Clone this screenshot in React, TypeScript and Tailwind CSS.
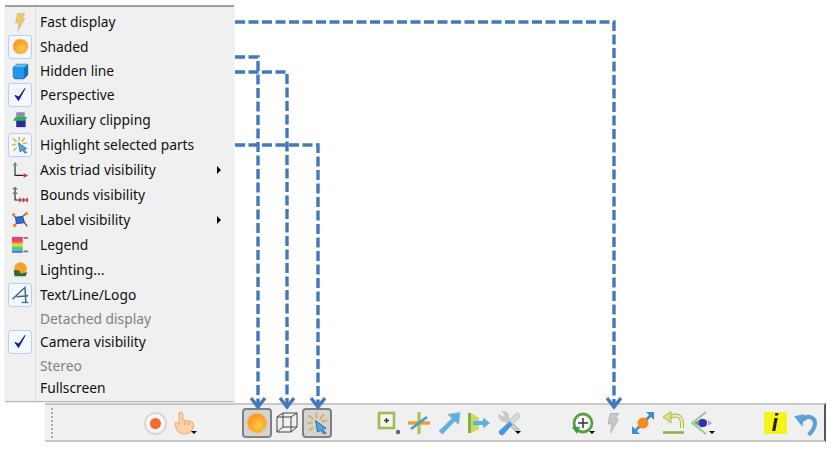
import type { ReactNode } from 'react';

function Check() {
  return (
    <svg viewBox="0 0 20 20" className="w-[20px] h-[20px]">
      <path d="M5 10.5 L8.5 15.5 L15 3.5 L9 12 Z" fill="#1a1aa8" stroke="#1a1aa8" strokeWidth="1" strokeLinejoin="round" />
    </svg>
  );
}

function Bolt({ color = '#f0c860', edge = '#c9b98f', big }: { color?: string; edge?: string; big?: boolean }) {
  return (
    <svg viewBox="0 0 20 24" className={big ? 'w-[18px] h-[22px]' : 'w-[16px] h-[20px]'}>
      <path d="M7 1.5 L16 1.5 L12.5 7.5 L16 7.5 L7.5 23 L9 13 L4.5 13 Z" fill={color} stroke={edge} strokeWidth="1" strokeLinejoin="round" />
    </svg>
  );
}

function Sun({ size = 17 }: { size?: number }) {
  return (
    <svg viewBox="0 0 20 20" width={size} height={size}>
      <defs>
        <radialGradient id="sunFill" cx="0.6" cy="0.65" r="0.7">
          <stop offset="0" stopColor="#fdcb45" />
          <stop offset="1" stopColor="#f98f18" />
        </radialGradient>
      </defs>
      <circle cx="10" cy="10" r="8.6" fill="url(#sunFill)" stroke="#fbb04a" strokeWidth="1.4" strokeDasharray="1.6 1" />
    </svg>
  );
}

function BlueCube() {
  return (
    <svg viewBox="0 0 20 20" className="w-[17px] h-[17px]">
      <path d="M1.5 5 L6 1.5 L18.5 1.5 L18.5 14 L14 18.5 L3 18.5 L1.5 16 Z" fill="#0f6fc0" stroke="#1a5e9c" strokeWidth="1" strokeLinejoin="round" />
      <path d="M1.5 5 L6 1.5 L18.5 1.5 L14 5.5 Z" fill="#62bdf2" />
      <path d="M1.5 5.5 L14 5.5 L14 18 L3 18 L1.5 16 Z" fill="#2196ec" />
    </svg>
  );
}

function Clipping() {
  return (
    <svg viewBox="0 0 20 20" className="w-[17px] h-[17px]">
      <rect x="5" y="1.5" width="10" height="7" fill="#8b8bb8" />
      <rect x="5" y="10" width="11" height="9" fill="#2a2a9c" />
      <path d="M4 7 L18 7 L15 11.5 L1 11.5 Z" fill="#2eb54a" />
    </svg>
  );
}

function Highlight({ size = 18 }: { size?: number }) {
  return (
    <svg viewBox="0 0 24 24" width={size} height={size}>
      <g stroke="#d9b25a" strokeWidth="2.2" strokeLinecap="round">
        <path d="M11 2 L11 6 M3 4 L7 7 M2 12 L6 11 M18 3 L15 7 M21 9 L17 10 M4 19 L7 16" />
      </g>
      <path d="M10 9 L21 17 L17 18 L21 22 L18.5 23 L15 19 L12 21 Z" fill="#5aa4de" stroke="#2a6aa5" strokeWidth="1" strokeLinejoin="round" />
    </svg>
  );
}

function AxisTriad() {
  return (
    <svg viewBox="0 0 20 20" className="w-[18px] h-[18px]">
      <path d="M4.5 5 L4.5 16 L14 16" fill="none" stroke="#222" strokeWidth="1.2" />
      <path d="M4.5 1 L7 5 L2 5 Z" fill="#2aa83a" />
      <path d="M19 16 L14 13.5 L14 18.5 Z" fill="#d83030" />
    </svg>
  );
}

function Bounds() {
  return (
    <svg viewBox="0 0 20 20" className="w-[18px] h-[18px]">
      <path d="M4.5 1 L4.5 15.5 L19 15.5" fill="none" stroke="#222" strokeWidth="1.2" />
      <path d="M2 3 L7 3 M2 8 L7 8" stroke="#2aa83a" strokeWidth="1.5" />
      <path d="M10 13 L10 18 M14 13 L14 18 M18 13 L18 18" stroke="#d83030" strokeWidth="1.5" />
    </svg>
  );
}

function LabelIcon() {
  return (
    <svg viewBox="0 0 20 20" className="w-[18px] h-[18px]">
      <path d="M5 7 L13 6 L15 13 L6 14 Z" fill="#2c6fd0" stroke="#173f80" strokeWidth="1" />
      <path d="M2 4 L5 7 M18 2 L13 6 M3 17 L6 14 M18 17 L15 13" stroke="#444" strokeWidth="1.3" />
      <circle cx="3" cy="4" r="1.8" fill="#e8862a" />
      <circle cx="17" cy="3" r="1.8" fill="#e8862a" />
      <circle cx="4" cy="16" r="1.8" fill="#e8862a" />
    </svg>
  );
}

function LegendIcon() {
  return (
    <svg viewBox="0 0 20 20" className="w-[18px] h-[18px]">
      <defs>
        <linearGradient id="legendBar" x1="0" y1="0" x2="0" y2="1">
          <stop offset="0" stopColor="#d83a9a" />
          <stop offset="0.3" stopColor="#f0504a" />
          <stop offset="0.5" stopColor="#f4e04a" />
          <stop offset="0.7" stopColor="#4ad06a" />
          <stop offset="0.85" stopColor="#3fc8d8" />
          <stop offset="1" stopColor="#3a3ad8" />
        </linearGradient>
      </defs>
      <rect x="1" y="1" width="12" height="17.5" fill="url(#legendBar)" />
      <path d="M14 2 L19 2 M14 17 L19 17" stroke="#777" strokeWidth="2" />
    </svg>
  );
}

function Lighting() {
  return (
    <svg viewBox="0 0 20 20" className="w-[17px] h-[17px]">
      <circle cx="10" cy="9" r="7.5" fill="#f6a21e" />
      <path d="M2 11 L8 11 L11 15 L18 13 L16 18 L3 18 Z" fill="#2f6b3a" />
    </svg>
  );
}

function TextLogo() {
  return (
    <svg viewBox="0 0 24 24" className="w-[20px] h-[20px]">
      <path d="M3 17 C8 13 13 7 18 3 L19 21 M8 14 L22 13" fill="none" stroke="#3d6a90" strokeWidth="1.8" />
      <path d="M14 21 L22 21" stroke="#3d6a90" strokeWidth="1.5" />
    </svg>
  );
}

function RecordIcon() {
  return (
    <span className="w-[23px] h-[23px] rounded-full bg-[#f8f8f8] border-2 border-[#d8d8d8] flex items-center justify-center">
      <span className="w-[11px] h-[11px] rounded-full bg-[#f5692e]" />
    </span>
  );
}

function DropMark() {
  return <span className="absolute right-[3px] bottom-[4px] w-0 h-0 border-x-[3px] border-x-transparent border-t-[3px] border-t-black" />;
}

function HandIcon() {
  return (
    <svg viewBox="0 0 24 24" className="w-[24px] h-[24px]">
      <path d="M6 3 C6 0.5 9.5 0.5 9.5 3 L10 9 L17 10 C21 11 21 14 20 17 C19 21 15 23 11 23 C6 23 3 19 2 13 C2 11 4 11 6 13 Z" fill="#fbd2a6" stroke="#eeb27e" strokeWidth="1.2" />
      <path d="M12 10 L12 14 M15.5 10.5 L15.5 14" stroke="#e59a5a" strokeWidth="1" />
    </svg>
  );
}

function WireCube() {
  return (
    <svg viewBox="0 0 24 24" className="w-[24px] h-[24px]">
      <path d="M2 6 L16 6 L16 21 L2 21 Z M2 6 L8 2 L22 2 L16 6 M22 2 L22 16 L16 21 M8 2 L8 16 L2 21 M8 16 L22 16" fill="none" stroke="#444" strokeWidth="1" />
    </svg>
  );
}

function FitBox() {
  return (
    <svg viewBox="0 0 24 24" className="w-[24px] h-[24px]">
      <rect x="2" y="2" width="15" height="15" fill="#f4f6e8" stroke="#9dbb5a" strokeWidth="2.6" />
      <path d="M7 9.5 L12 9.5 M9.5 7 L9.5 12" stroke="#333" strokeWidth="1.3" />
      <circle cx="21" cy="21" r="2.2" fill="#666" />
    </svg>
  );
}

function CrossIcon() {
  return (
    <svg viewBox="0 0 24 24" className="w-[24px] h-[24px]">
      <path d="M12 1 L12 23" stroke="#a9c85a" strokeWidth="3.4" />
      <path d="M1 12 L23 12" stroke="#f59a2a" strokeWidth="3.4" />
      <path d="M4 18 L20 6" stroke="#4a9bd8" strokeWidth="2.8" />
    </svg>
  );
}

function ArrowIcon() {
  return (
    <svg viewBox="0 0 24 24" className="w-[24px] h-[24px]">
      <path d="M2 20 L15 7.5 L11 3.5 L23 1.5 L21.5 13.5 L18 10 L5.5 23 Z" fill="#5cb0e6" stroke="#8abcd8" strokeWidth="1" strokeLinejoin="round" />
    </svg>
  );
}

function ExtractIcon() {
  return (
    <svg viewBox="0 0 24 24" className="w-[24px] h-[24px]">
      <path d="M1 2 L4 2 L12 7 L12 18 L4 22 L1 22 Z" fill="#c8dc62" />
      <path d="M1 2 L4 2 L4 22 L1 22 Z" fill="#7fb03a" />
      <path d="M6 10 L16 10 L16 6.5 L23 12 L16 17.5 L16 14 L6 14 Z" fill="#5cb0e6" />
    </svg>
  );
}

function ToolsIcon() {
  return (
    <svg viewBox="0 0 24 24" className="w-[25px] h-[25px]">
      <path d="M2 3 L5 6 L8 3 L5 1 C9 0 12 3 11 7 L22 18 L19 21 L8 10 C4 11 1 7 2 3 Z" fill="#c9ccce" stroke="#b5b8ba" strokeWidth="0.6" />
      <path d="M13 7.5 L18 2.5 C20 1 23 3 22 6 L17 11 Z" fill="#d6d8da" stroke="#b5b8ba" strokeWidth="0.6" />
      <path d="M2 19 L12 10 L15 13 L6 23 C3 24 1 21 2 19 Z" fill="#4a98e0" />
    </svg>
  );
}

function ZoomRing() {
  return (
    <svg viewBox="0 0 24 24" className="w-[24px] h-[24px]">
      <circle cx="12" cy="12" r="9" fill="#fafafa" stroke="#5f9e3e" strokeWidth="2.8" />
      <path d="M7 12 L17 12 M12 7 L12 17" stroke="#333" strokeWidth="1.5" />
      <path d="M1 16 L9 16 L6 23 Z" fill="#35a040" />
    </svg>
  );
}

function ExplodeIcon() {
  return (
    <svg viewBox="0 0 24 24" className="w-[24px] h-[24px]">
      <path d="M3 21 L9 15 M15 9 L21 3" stroke="#3f8fc8" strokeWidth="2.8" />
      <path d="M1 15 L1 23 L9 23 Z M23 1 L15 1 L23 9 Z" fill="#3f8fc8" />
      <circle cx="12" cy="12" r="5.5" fill="#f58a22" />
    </svg>
  );
}

function UndoGreen() {
  return (
    <svg viewBox="0 0 24 24" className="w-[24px] h-[24px]">
      <path d="M8 6 L14 4.5 C19 4 21 8 21 13 L21 17" fill="none" stroke="#a9bb55" strokeWidth="4" />
      <path d="M8 6 L14 4.5 C19 4 21 8 21 13 L21 17" fill="none" stroke="#eef0b0" strokeWidth="2" />
      <path d="M10 0.5 L2 6 L10 12 Z" fill="#d9e480" stroke="#9fb04a" strokeWidth="0.8" />
      <path d="M2 21.5 L23 21.5" stroke="#8fb04e" strokeWidth="2.6" />
    </svg>
  );
}

function EyeIcon() {
  return (
    <svg viewBox="0 0 24 24" className="w-[24px] h-[24px]">
      <path d="M15 1 L1 12 L15 23" fill="none" stroke="#7fd08a" strokeWidth="1.6" />
      <path d="M3 12 L11 7 L11 17 Z" fill="#8a8a8a" />
      <circle cx="12" cy="12" r="4" fill="#2f2fb8" />
      <path d="M17 9 L21 12 L17 15 Z" fill="#a9a9dc" />
    </svg>
  );
}

function InfoIcon() {
  return (
    <span className="w-[23px] h-[22px] bg-[#f4f41a] flex items-center justify-center text-[23px] leading-none font-bold italic text-[#222] font-['Liberation_Sans',sans-serif]">
      i
    </span>
  );
}

function UndoBlue() {
  return (
    <svg viewBox="0 0 24 24" className="w-[25px] h-[25px]">
      <path d="M9 9 C14 3 22 6 21 13 C20.5 17 19 19 15 23" fill="none" stroke="#5aa2d8" strokeWidth="4" />
      <path d="M1 5 L11 3 L9 15 Z" fill="#5aa2d8" />
    </svg>
  );
}

const menuItems: { label: string; h: string; icon?: ReactNode; boxed?: boolean; disabled?: boolean; submenu?: boolean }[] = [
  { label: 'Fast display', h: 'h-[25px]', icon: <Bolt /> },
  { label: 'Shaded', h: 'h-[25px]', icon: <Sun />, boxed: true },
  { label: 'Hidden line', h: 'h-[24px]', icon: <BlueCube /> },
  { label: 'Perspective', h: 'h-[24px]', icon: <Check />, boxed: true },
  { label: 'Auxiliary clipping', h: 'h-[25px]', icon: <Clipping /> },
  { label: 'Highlight selected parts', h: 'h-[25px]', icon: <Highlight />, boxed: true },
  { label: 'Axis triad visibility', h: 'h-[25px]', icon: <AxisTriad />, submenu: true },
  { label: 'Bounds visibility', h: 'h-[25px]', icon: <Bounds /> },
  { label: 'Label visibility', h: 'h-[25px]', icon: <LabelIcon />, submenu: true },
  { label: 'Legend', h: 'h-[25px]', icon: <LegendIcon /> },
  { label: 'Lighting...', h: 'h-[25px]', icon: <Lighting /> },
  { label: 'Text/Line/Logo', h: 'h-[25px]', icon: <TextLogo />, boxed: true },
  { label: 'Detached display', h: 'h-[23px]', disabled: true },
  { label: 'Camera visibility', h: 'h-[24px]', icon: <Check />, boxed: true },
  { label: 'Stereo', h: 'h-[23px]', disabled: true },
  { label: 'Fullscreen', h: 'h-[21px]' },
];

function Slot({ children, active, drop }: { children: ReactNode; active?: boolean; drop?: boolean }) {
  return (
    <div
      className={`relative w-[30px] h-[30px] flex items-center justify-center shrink-0 ${active ? 'border-2 border-[#808080] rounded-[4px] bg-[#d4d4d4]' : ''}`}
    >
      <div className="flex items-center justify-center blur-[0.3px]">{children}</div>
      {drop && <DropMark />}
    </div>
  );
}

function Arrow({ x }: { x: number }) {
  return <path d={`M${x - 7} 398 L${x} 407 L${x + 7} 398`} fill="none" stroke="#4279be" strokeWidth="3.4" />;
}

export default function App() {
  return (
    <div className="relative w-[834px] h-[453px] bg-white overflow-hidden font-['Noto_Sans',sans-serif] text-[13.8px] text-[#111]">
      <div className="pt-[5px] pl-[5px]">
        <div className="w-[229px] h-[396px] pt-[2px] bg-[#f0f0f0] border-t-2 border-[#a0a0a0] shadow-[0_1px_1px_#b5b5b5]">
          <div className="relative">
            <div className="absolute left-[30px] top-[-2px] h-[394px] w-px bg-[#dcdcdc]" />
            {menuItems.map((item) => (
              <div key={item.label} className={`flex items-center ${item.h}`}>
                <div className="w-[30px] flex items-center justify-center shrink-0">
                  {item.icon &&
                    (item.boxed ? (
                      <span className="w-[24px] h-[24px] flex items-center justify-center rounded-[3px] border border-[#b5d0f2] bg-[#f3f8ff]">
                        {item.icon}
                      </span>
                    ) : (
                      item.icon
                    ))}
                </div>
                <span className={`ml-[5px] leading-none whitespace-nowrap ${item.disabled ? 'text-[#808080]' : ''}`}>{item.label}</span>
                {item.submenu && (
                  <span className="ml-auto mr-[13px] w-0 h-0 border-y-[4px] border-y-transparent border-l-[4px] border-l-black" />
                )}
              </div>
            ))}
          </div>
        </div>
      </div>

      <div className="ml-[45px] mt-[2px] w-[781px] h-[39px] flex items-center pt-[1px] bg-[#f0f0f0] border-t-2 border-b-2 border-[#c8c8c8] border-r-2 border-r-[#555]">
        <div className="ml-[6px] w-[2px] h-[30px] border-l-2 border-dotted border-[#aaa]" />
        <div className="ml-[87px] flex items-center">
          <Slot><RecordIcon /></Slot>
          <Slot drop><HandIcon /></Slot>
        </div>
        <div className="ml-[42px] flex items-center">
          <Slot active><Sun size={22} /></Slot>
          <Slot><WireCube /></Slot>
          <Slot active><Highlight size={23} /></Slot>
        </div>
        <div className="ml-[42px] flex items-center">
          <Slot><FitBox /></Slot>
          <Slot><CrossIcon /></Slot>
          <Slot><ArrowIcon /></Slot>
          <Slot><ExtractIcon /></Slot>
          <Slot drop><ToolsIcon /></Slot>
        </div>
        <div className="ml-[44px] flex items-center">
          <Slot drop><ZoomRing /></Slot>
          <Slot><Bolt big color="#c8c8c8" edge="#b0b0b0" /></Slot>
          <Slot><ExplodeIcon /></Slot>
          <Slot><UndoGreen /></Slot>
          <Slot drop><EyeIcon /></Slot>
        </div>
        <div className="ml-[42px] flex items-center">
          <Slot><InfoIcon /></Slot>
          <Slot><UndoBlue /></Slot>
        </div>
      </div>

      <svg className="absolute inset-0 pointer-events-none" width="834" height="453" viewBox="0 0 834 453">
        <g fill="none" stroke="#4279be" strokeWidth="3.4" strokeDasharray="10 3.5">
          <path d="M235 22 L614 22 L614 405" />
          <path d="M235 57 L258 57 L258 405" />
          <path d="M235 72 L287 72 L287 405" />
          <path d="M235 145 L318 145 L318 405" />
        </g>
        <Arrow x={258} />
        <Arrow x={287} />
        <Arrow x={318} />
        <Arrow x={614} />
      </svg>
    </div>
  );
}
